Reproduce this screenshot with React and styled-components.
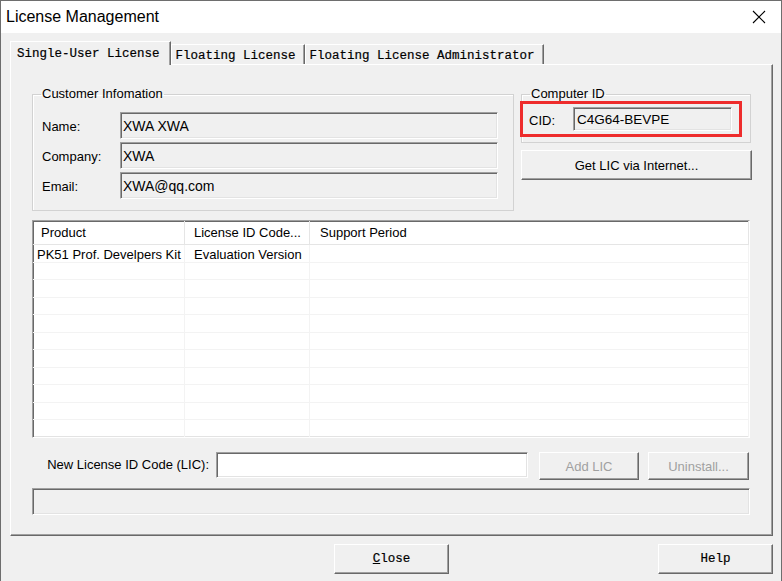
import React from 'react'
import styled, { createGlobalStyle } from 'styled-components'

const GlobalStyle = createGlobalStyle`
  html, body {
    margin: 0;
    padding: 0;
    background: #f0f0f0;
    overflow: hidden;
  }
  * { box-sizing: border-box; }
`

const columns = [
  { title: 'Product', width: 152, pad: 8, cellPad: 4 },
  { title: 'License ID Code...', width: 125, pad: 9, cellPad: 9 },
  { title: 'Support Period', width: null, pad: 10, cellPad: 9 }
]

const rows = [
  ['PK51 Prof. Develpers Kit', 'Evaluation Version', ''],
  ...Array.from({ length: 10 }, () => ['', '', ''])
]

const customerFields = [
  { label: 'Name:', value: 'XWA XWA' },
  { label: 'Company:', value: 'XWA' },
  { label: 'Email:', value: 'XWA@qq.com' }
]

const tabs = ['Single-User License', 'Floating License', 'Floating License Administrator']

function App() {
  return (
    <>
      <GlobalStyle />
      <Window>
        <TitleBar>
          <Title>License Management</Title>
          <CloseGlyph width="14" height="14" viewBox="0 0 14 14">
            <path d="M1 1 L13 13 M13 1 L1 13" stroke="#000" strokeWidth="1.1" fill="none" />
          </CloseGlyph>
        </TitleBar>

        <Body>
          <TabStrip>
            {tabs.map((t, i) => (
              <Tab key={t} $active={i === 0}>{t}</Tab>
            ))}
          </TabStrip>

          <TabPanel>
            <TopRow>
              <GroupBox $pad="10px 15px 11px 9px">
                <Legend $offset={-1}>Customer Infomation</Legend>
                <FieldGrid>
                  {customerFields.map(f => (
                    <React.Fragment key={f.label}>
                      <FieldLabel>{f.label}</FieldLabel>
                      <ReadOnlyInput readOnly defaultValue={f.value} />
                    </React.Fragment>
                  ))}
                </FieldGrid>
              </GroupBox>

              <RightColumn>
                <GroupBox $pad="5px 18px 11px 7px">
                  <Legend $offset={1}>Computer ID</Legend>
                  <CidRow>
                    <FieldLabel>CID:</FieldLabel>
                    <ReadOnlyInput $small readOnly defaultValue="C4G64-BEVPE" />
                  </CidRow>
                </GroupBox>
                <WideButton>Get LIC via Internet...</WideButton>
                <RedMark />
              </RightColumn>
            </TopRow>

            <ListView>
              <ListHeader>
                {columns.map(c => (
                  <HeaderCell key={c.title} $pad={c.pad}>{c.title}</HeaderCell>
                ))}
              </ListHeader>
              {rows.map((r, i) => (
                <ListRow key={i}>
                  {r.map((v, j) => (
                    <ListCell key={j} $pad={columns[j].cellPad}>{v}</ListCell>
                  ))}
                </ListRow>
              ))}
            </ListView>

            <LicRow>
              <LicLabel>New License ID Code (LIC):</LicLabel>
              <LicInput />
              <SmallButton disabled $width={100} $gap={11}>Add LIC</SmallButton>
              <SmallButton disabled $width={101} $gap={9}>Uninstall...</SmallButton>
            </LicRow>

            <StatusBox />
          </TabPanel>

          <Footer>
            <DialogButton><u>C</u>lose</DialogButton>
            <DialogButton $push>Help</DialogButton>
          </Footer>
        </Body>
      </Window>
    </>
  )
}

export default App

const uiFont = `"Liberation Sans", Arial, sans-serif`
const monoFont = `"Liberation Mono", "Courier New", monospace`

const Window = styled.div`
  width: 782px;
  height: 581px;
  display: flex;
  flex-direction: column;
  border: 1px solid #6e6e6e;
  border-bottom: none;
  background: #f0f0f0;
`

const TitleBar = styled.div`
  height: 32px;
  flex: none;
  background: #fff;
  display: flex;
  align-items: center;
  justify-content: space-between;
  padding: 0 15px 0 5px;
`

const Title = styled.span`
  font-family: ${uiFont};
  font-size: 16px;
  color: #000;
`

const CloseGlyph = styled.svg`
  display: block;
`

const Body = styled.div`
  flex: 1;
  display: flex;
  flex-direction: column;
  padding: 8px 8px 0 9px;
`

const TabStrip = styled.div`
  height: 23px;
  display: flex;
  align-items: flex-end;
  position: relative;
  z-index: 1;
`

const Tab = styled.div`
  font-family: ${monoFont};
  font-size: 12.5px;
  color: #000;
  -webkit-text-stroke: 0.2px #000;
  white-space: nowrap;
  background: #f0f0f0;
  border-left: 1px solid #fff;
  border-top: 1px solid #fff;
  border-right: 1px solid #696969;
  box-shadow: inset -1px 0 0 #a0a0a0;
  height: ${p => (p.$active ? '24px' : '20px')};
  line-height: ${p => (p.$active ? '22px' : '19px')};
  margin-bottom: ${p => (p.$active ? '-1px' : '0')};
  padding: ${p => (p.$active ? '1px 10px 0 6px' : '2px 8px 0 4px')};
`

const TabPanel = styled.div`
  height: 472px;
  border: 1px solid;
  border-color: #fff #696969 #696969 #fff;
  box-shadow: inset -1px -1px 0 #a0a0a0;
  padding: 21px 20px 20px 21px;
  display: flex;
  flex-direction: column;
`

const TopRow = styled.div`
  display: flex;
  gap: 7px;
`

const GroupBox = styled.fieldset`
  margin: 0;
  border: 1px solid #d2d2d2;
  box-shadow: inset 1px 1px 0 #fff;
  padding: ${p => p.$pad};
  min-width: 0;
  flex: 1;
`

const Legend = styled.legend`
  font-family: ${uiFont};
  font-size: 13px;
  line-height: 16px;
  color: #000;
  padding: 0 1px;
  margin-left: ${p => p.$offset}px;
`

const FieldGrid = styled.div`
  display: grid;
  grid-template-columns: 78px 378px;
  grid-auto-rows: 27px;
  row-gap: 3px;
  align-items: center;
`

const FieldLabel = styled.span`
  font-family: ${uiFont};
  font-size: 13px;
  color: #000;
  padding-top: 2px;
`

const sunken = `
  border: 1px solid;
  border-color: #a0a0a0 #fff #fff #a0a0a0;
  box-shadow: inset 1px 1px 0 #696969, inset -1px -1px 0 #e3e3e3;
`

const ReadOnlyInput = styled.input`
  ${sunken}
  height: ${p => (p.$small ? '24px' : '27px')};
  width: 100%;
  background: #f0f0f0;
  font-family: ${uiFont};
  font-size: ${p => (p.$small ? '13.5px' : '14px')};
  color: #000;
  padding: 0 0 0 ${p => (p.$small ? '3px' : '2px')};
  outline: none;
`

const RightColumn = styled.div`
  width: 231px;
  flex: none;
  display: flex;
  flex-direction: column;
  position: relative;
  & > fieldset {
    flex: none;
    width: 230px;
  }
`

const CidRow = styled.div`
  display: grid;
  grid-template-columns: 44px 159px;
  align-items: center;
`

const raised = `
  border: 1px solid;
  border-color: #fff #696969 #696969 #fff;
  box-shadow: inset -1px -1px 0 #a0a0a0;
  background: #f0f0f0;
  margin: 0;
  padding: 0;
`

const WideButton = styled.button`
  ${raised}
  margin-top: 7px;
  height: 30px;
  width: 231px;
  font-family: ${uiFont};
  font-size: 13px;
  color: #000;
`

const RedMark = styled.div`
  position: absolute;
  left: -1px;
  top: 15px;
  width: 222px;
  height: 36px;
  border: 3px solid #ee2c2c;
  pointer-events: none;
`

const ListView = styled.div`
  ${sunken}
  margin-top: 9px;
  margin-right: 2px;
  height: 218px;
  background: #fff;
  overflow: hidden;
`

const gridCols = `152px 125px 1fr`

const ListHeader = styled.div`
  display: grid;
  grid-template-columns: ${gridCols};
  height: 24px;
  border-bottom: 1px solid #e5e5e5;
`

const HeaderCell = styled.div`
  font-family: ${uiFont};
  font-size: 13px;
  color: #000;
  line-height: 24px;
  padding-left: ${p => p.$pad}px;
  border-right: 1px solid #e5e5e5;
  white-space: nowrap;
  overflow: hidden;
`

const ListRow = styled.div`
  display: grid;
  grid-template-columns: ${gridCols};
  height: 17.5px;
  border-bottom: 1px solid #f3f3f3;
`

const ListCell = styled.div`
  font-family: ${uiFont};
  font-size: 13px;
  color: #000;
  line-height: 19px;
  padding-left: ${p => p.$pad}px;
  border-right: 1px solid #f3f3f3;
  white-space: nowrap;
  overflow: hidden;
`

const LicRow = styled.div`
  margin-top: 14px;
  height: 27px;
  display: flex;
  align-items: flex-start;
`

const LicLabel = styled.span`
  width: 184px;
  flex: none;
  text-align: right;
  padding-right: 7px;
  font-family: ${uiFont};
  font-size: 13px;
  line-height: 26px;
  color: #000;
  white-space: nowrap;
`

const LicInput = styled.input`
  ${sunken}
  width: 312px;
  height: 26px;
  background: #fff;
  outline: none;
`

const SmallButton = styled.button`
  ${raised}
  width: ${p => p.$width}px;
  margin-left: ${p => p.$gap}px;
  height: 28px;
  font-family: ${uiFont};
  font-size: 13px;
  color: #a0a0a0;
`

const StatusBox = styled.div`
  ${sunken}
  margin-top: 9px;
  margin-right: 2px;
  height: 27px;
  background: #f0f0f0;
`

const Footer = styled.div`
  margin-top: 8px;
  display: flex;
  padding-left: 324px;
`

const DialogButton = styled.button`
  ${raised}
  width: 115px;
  height: 30px;
  margin-left: ${p => (p.$push ? 'auto' : '0')};
  font-family: ${monoFont};
  font-size: 12.5px;
  color: #000;
  -webkit-text-stroke: 0.2px #000;
  u { text-decoration: underline; }
`
